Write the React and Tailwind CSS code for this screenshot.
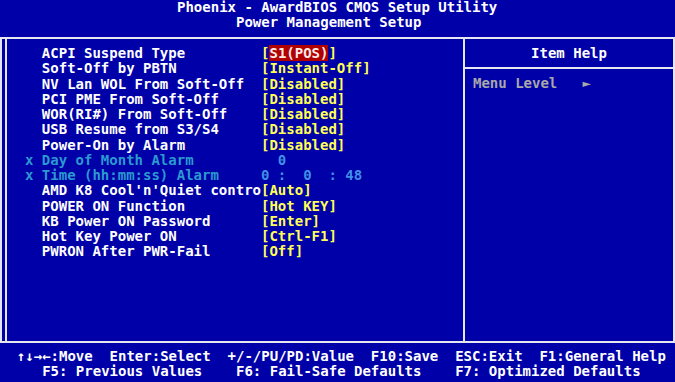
import React from 'react'

const ROW = 'h-[15.28px] leading-[15.28px] whitespace-pre'

const items = [
  { label: 'ACPI Suspend Type', value: 'S1(POS)', selected: true },
  { label: 'Soft-Off by PBTN', value: '[Instant-Off]' },
  { label: 'NV Lan WOL From Soft-Off', value: '[Disabled]' },
  { label: 'PCI PME From Soft-Off', value: '[Disabled]' },
  { label: 'WOR(RI#) From Soft-Off', value: '[Disabled]' },
  { label: 'USB Resume from S3/S4', value: '[Disabled]' },
  { label: 'Power-On by Alarm', value: '[Disabled]' },
  { label: 'Day of Month Alarm', value: '  0', locked: true },
  { label: 'Time (hh:mm:ss) Alarm', value: '0 :  0  : 48', locked: true },
  { label: "AMD K8 Cool'n'Quiet contro", value: '[Auto]' },
  { label: 'POWER ON Function', value: '[Hot KEY]' },
  { label: 'KB Power ON Password', value: '[Enter]' },
  { label: 'Hot Key Power ON', value: '[Ctrl-F1]' },
  { label: 'PWRON After PWR-Fail', value: '[Off]' },
]

const SettingRow = ({ item }) => {
  if (item.locked) {
    return (
      <div className={ROW}>
        <span className="text-[#2a9ad0]">{'x ' + item.label.padEnd(26)}</span>
        <span className="text-[#3f8fe6]">{item.value}</span>
      </div>
    )
  }
  return (
    <div className={ROW}>
      <span className="text-white">{'  ' + item.label.padEnd(26)}</span>
      {item.selected ? (
        <span className="text-[#ffff55]">
          [<span className="bg-[#b00000] text-[#ffe8e8]">{item.value}</span>]
        </span>
      ) : (
        <span className="text-[#ffff55]">{item.value}</span>
      )}
    </div>
  )
}

export default function App() {
  return (
    <div
      className="w-[675px] h-[382px] overflow-hidden bg-[#0000a8] text-white text-[14px] font-bold"
      style={{ fontFamily: '"DejaVu Sans Mono", "Liberation Mono", monospace' }}
    >
      {/* title */}
      <div className="h-[37px]">
        <div className={ROW}>{' '.repeat(21) + 'Phoenix - AwardBIOS CMOS Setup Utility'}</div>
        <div className={ROW}>{' '.repeat(28) + 'Power Management Setup'}</div>
      </div>

      {/* main frame */}
      <div className="h-[306px] border-l-2 border-t-2 border-b-2 border-[#e6e6f0]">
        <div className="ml-[3px] h-full flex border-l-2 border-r-2 border-[#e6e6f0]">
          <div className="w-[456px] pt-[7px] pl-[18px]">
            {items.map((item) => (
              <SettingRow key={item.label} item={item} />
            ))}
          </div>
          <div className="flex-1 border-l-2 border-[#e6e6f0]">
            <div className="pt-[7px] h-[30px] border-b-2 border-[#e6e6f0]">
              <div className={ROW + ' text-center'}>Item Help</div>
            </div>
            <div className={ROW + ' mt-[7px] pl-[8px] text-[#a8a8a8]'}>{'Menu Level   ►'}</div>
          </div>
        </div>
      </div>

      {/* footer */}
      <div className="pt-[6px]">
        <div className={ROW}>
          {'  ↑↓→←:Move  Enter:Select  +/-/PU/PD:Value  F10:Save  ESC:Exit  F1:General Help'}
        </div>
        <div className={ROW}>
          {'     F5: Previous Values    F6: Fail-Safe Defaults    F7: Optimized Defaults'}
        </div>
      </div>
    </div>
  )
}
